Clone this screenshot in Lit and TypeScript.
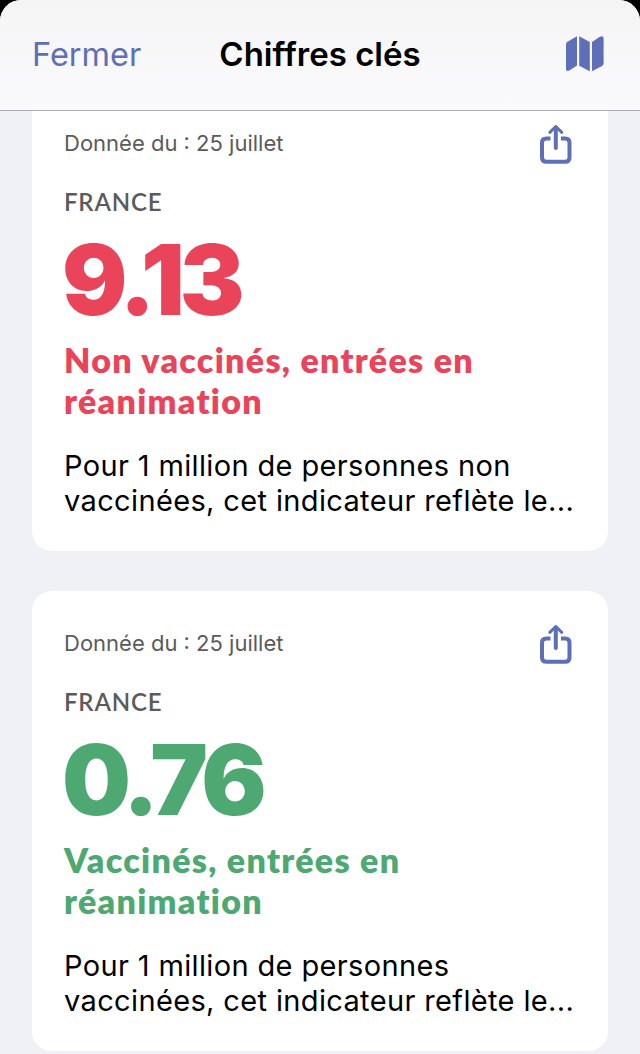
import { LitElement, html, css, svg } from "lit";
import { customElement, property } from "lit/decorators.js";

interface KeyFigure {
  tone: "red" | "green";
  value: string;
  title: string[];
  text: string[];
}

const FIGURES: KeyFigure[] = [
  {
    tone: "red",
    value: "9.13",
    title: ["Non vaccinés, entrées en", "réanimation"],
    text: ["Pour 1 million de personnes non", "vaccinées, cet indicateur reflète le..."],
  },
  {
    tone: "green",
    value: "0.76",
    title: ["Vaccinés, entrées en", "réanimation"],
    text: ["Pour 1 million de personnes", "vaccinées, cet indicateur reflète le..."],
  },
];

const mapIcon = svg`
  <path d="M0 8.4Q0 6.6 1.5 5.7L11 0.3V29.6L3.8 34.3Q0 36.2 0 32.4Z"/>
  <path d="M13.2 0.2L23.8 6V35.3L13.2 29.8Z"/>
  <path d="M26 6L33.5 1Q37.6 -1 37.6 2.8V27.2Q37.6 29 36.1 29.9L26 35.3Z"/>`;

@customElement("key-figure-card")
export class KeyFigureCard extends LitElement {
  @property({ attribute: false }) figure!: KeyFigure;

  static styles = css`
    :host { display: block; flex: none; background: #fff; border-radius: 20px; padding: 32px 32px 33px; }
    .top { display: flex; justify-content: space-between; align-items: center; height: 40px; }
    .date { font-size: 22px; line-height: 28px; color: #5b5b5b; }
    .share { display: block; width: 32px; height: 40px; margin-right: 4px; overflow: visible; fill: none; stroke: #5e6fb8; stroke-width: 4; stroke-linecap: round; stroke-linejoin: round; }
    .place { margin-top: 24px; font: 600 24px/30px Lato, sans-serif; letter-spacing: 0.8px; color: #5b5b5b; }
    .value { margin-top: 13px; margin-left: -2px; font: 900 97px/100px Inter, sans-serif; letter-spacing: -5.2px; white-space: nowrap; }
    .title { margin-top: 9px; font: 800 34px/41px Lato, sans-serif; letter-spacing: 1.3px; white-space: nowrap; }
    .text { margin-top: 27px; font-size: 29px; line-height: 35px; letter-spacing: 0.36px; color: #000; white-space: nowrap; }
    .line { display: block; }
    .red { color: #ea445a; }
    .green { color: #4da871; }
  `;

  render() {
    const f = this.figure;
    return html`
      <div class="top">
        <span class="date">Donnée du : 25 juillet</span>
        <svg class="share" viewBox="0 0 32 40">
          <path stroke-linecap="butt" d="M10.5 15.4H6.5Q2 15.4 2 19.7V34.5Q2 38.8 6.5 38.8H25Q29.5 38.8 29.5 34.5V19.7Q29.5 15.4 25 15.4H21" />
          <path d="M15.8 25V4.5" /><path stroke-width="3" d="M9.8 9.3L15.8 3.5L21.8 9.3" />
        </svg>
      </div>
      <div class="place">FRANCE</div>
      <div class="value ${f.tone}">${f.value}</div>
      <div class="title ${f.tone}">${f.title.map((l) => html`<span class="line">${l}</span>`)}</div>
      <div class="text">${f.text.map((l) => html`<span class="line">${l}</span>`)}</div>
    `;
  }
}

@customElement("app-root")
export class AppRoot extends LitElement {
  static styles = css`
    :host { display: block; height: 1054px; background: #000; overflow: hidden; font-family: Inter, "Liberation Sans", sans-serif; }
    .sheet { height: 100%; display: flex; flex-direction: column; background: #f0f1f6; border-radius: 21px 21px 0 0; overflow: hidden; }
    .bar { flex: none; box-sizing: border-box; height: 111px; padding: 0 32px 3px; display: grid; grid-template-columns: 1fr auto 1fr; align-items: center; background: linear-gradient(#f5f5f6, #fafafc); border-bottom: 1px solid #a9a9b0; }
    .close { padding-top: 2px; font-size: 32.5px; line-height: 40px; color: #5e6fb8; }
    .heading { margin: 0; font-size: 33px; line-height: 40px; font-weight: 600; color: #000; }
    .map { justify-self: end; margin-right: 4px; width: 38px; height: 36px; fill: #5e6fb8; }
    .list { flex: 1; min-height: 0; overflow: hidden; display: flex; flex-direction: column; gap: 40px; padding: 0 32px; }
    .list > :first-child { margin-top: -20px; }
  `;

  render() {
    return html`
      <div class="sheet">
        <header class="bar">
          <span class="close">Fermer</span>
          <h1 class="heading">Chiffres clés</h1>
          <svg class="map" viewBox="0 0 38 36">${mapIcon}</svg>
        </header>
        <main class="list">
          ${FIGURES.map((f) => html`<key-figure-card .figure=${f}></key-figure-card>`)}
        </main>
      </div>
    `;
  }
}
